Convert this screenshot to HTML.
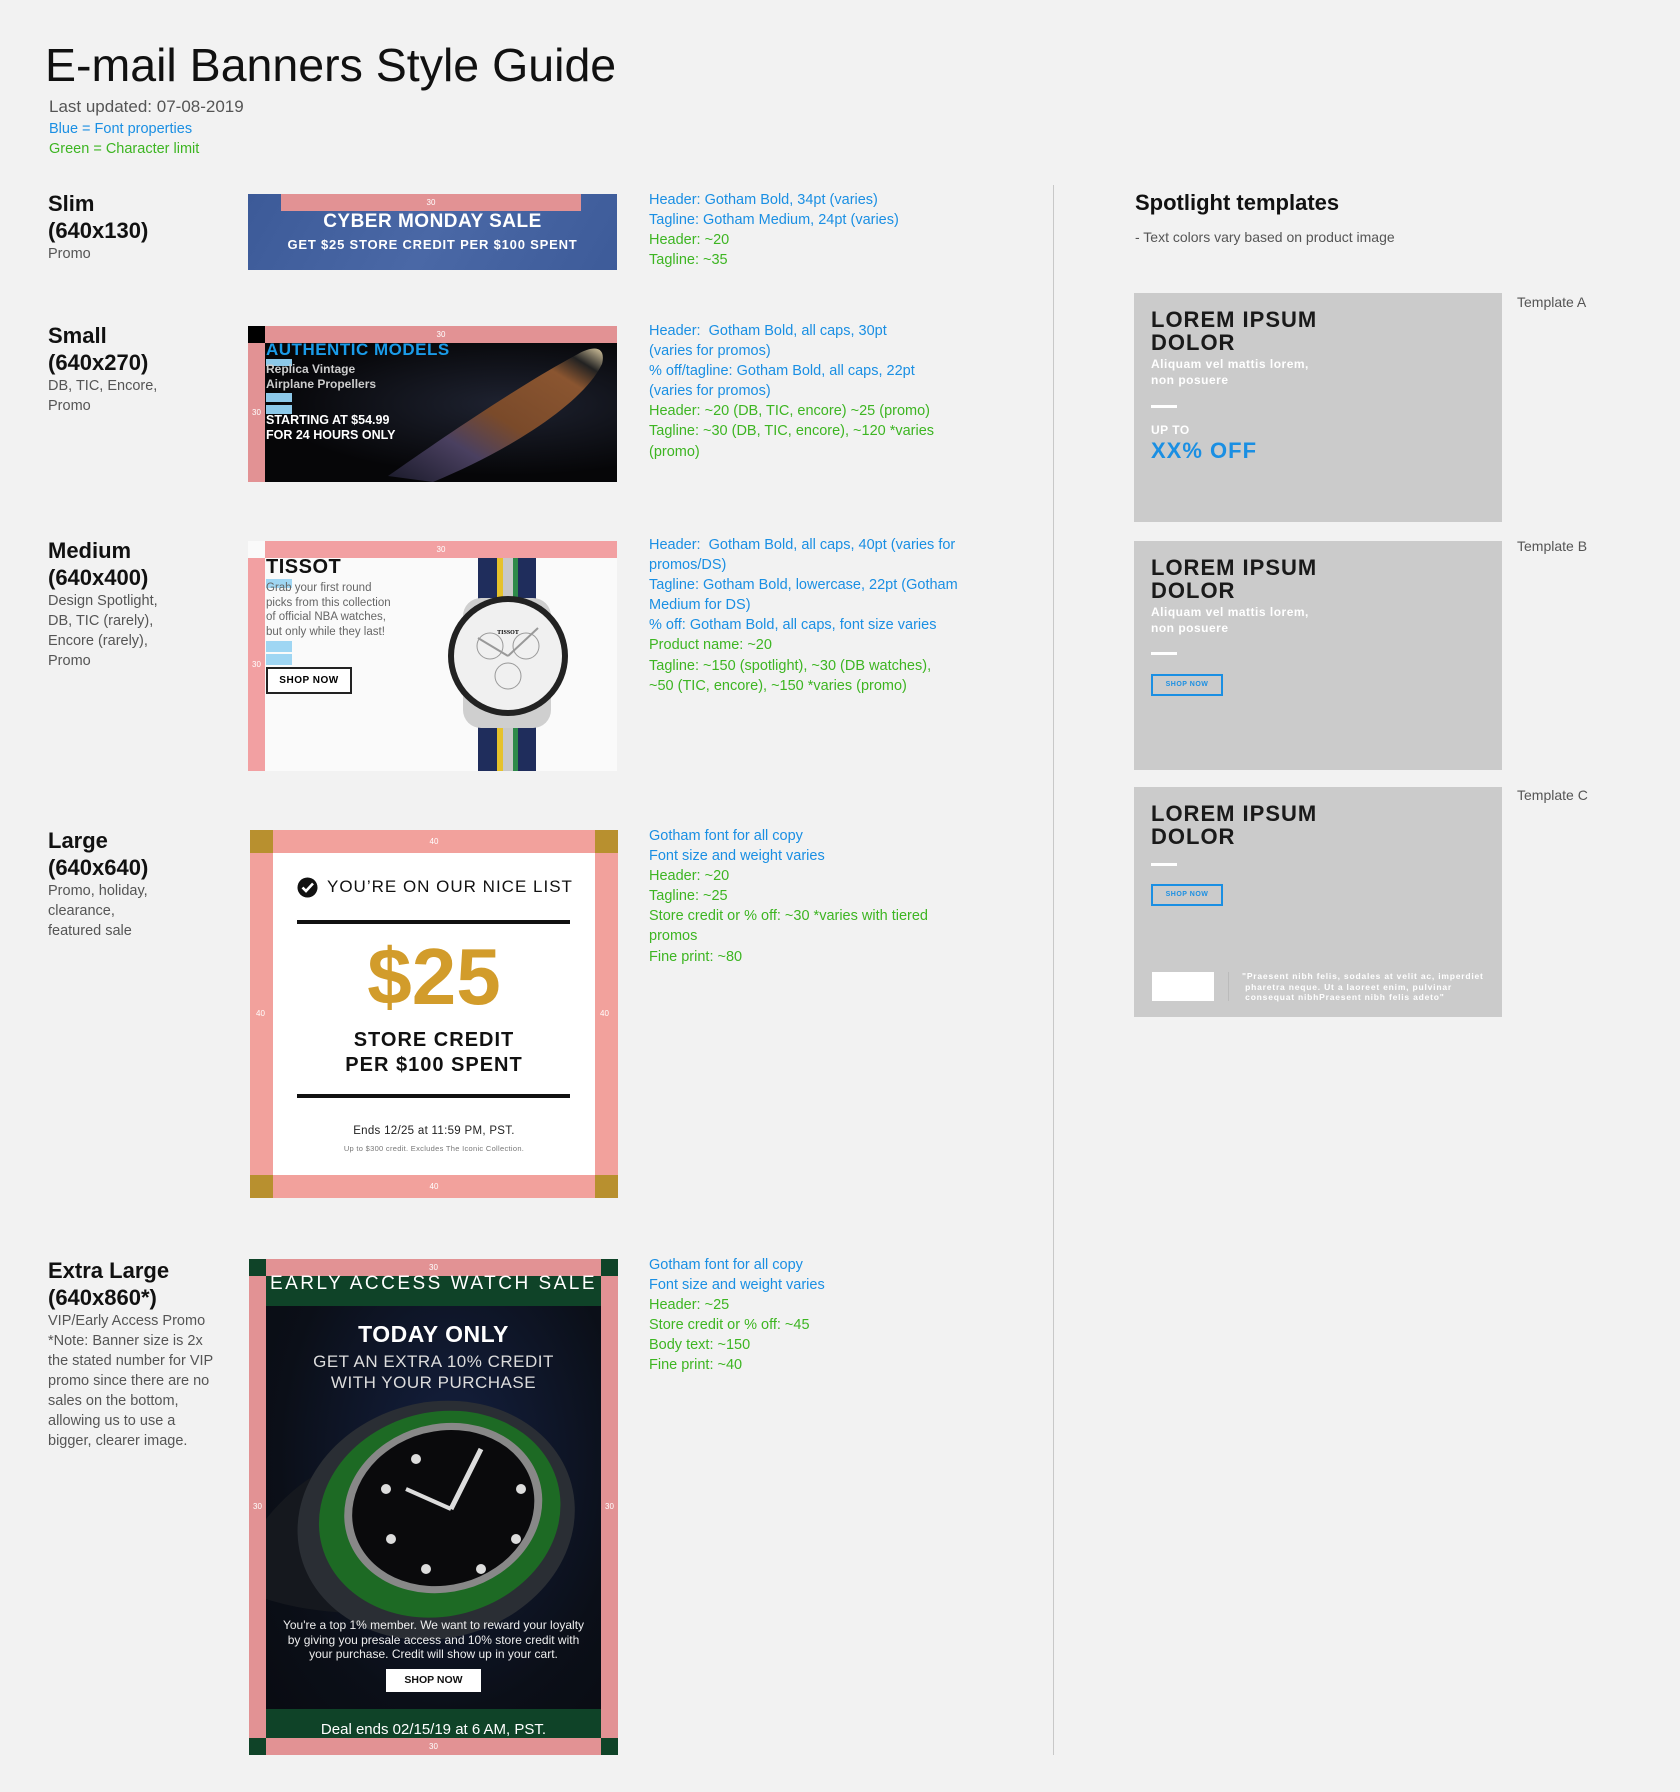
<!DOCTYPE html>
<html><head><meta charset="utf-8"><style>
*{margin:0;padding:0;box-sizing:border-box}
body{width:1680px;height:1792px;background:#f2f2f2;position:relative;overflow:hidden;font-family:"Liberation Sans",Arial,sans-serif}
.a{position:absolute;white-space:nowrap}
.lbl{position:absolute;left:48px;color:#555;font-size:14.5px;line-height:20px}
.lbl b{display:block;color:#111;font-size:22px;line-height:27px}
.n{position:absolute;left:649px;font-size:14.5px;line-height:20.1px}
.bl{color:#1a8fe3}.gr{color:#3db522}
.pk{position:absolute;background:#e29294}
.num{color:#fff;font-size:8px;text-align:center}
.tpl{position:absolute;left:1134px;width:368px;background:#cbcbcb}
.tpl h3{position:absolute;left:17px;font-size:22px;line-height:23px;color:#1a1a1a;letter-spacing:1px;font-weight:bold}
.tpl .s{position:absolute;left:17px;color:#fff;font-size:12px;font-weight:bold;line-height:16px;letter-spacing:.5px}
.tpl .d{position:absolute;left:17px;width:26px;height:3px;background:#fff}
.tpl .btn{position:absolute;left:17px;width:72px;height:22px;border:2px solid #1a8fe3;color:#1a8fe3;font-size:7px;font-weight:bold;text-align:center;line-height:18px;letter-spacing:.5px}
.tl{position:absolute;left:1517px;color:#555;font-size:14px}
</style></head><body>

<div class="a" style="left:45px;top:38px;font-size:46.5px;color:#111">E-mail Banners Style Guide</div>
<div class="a" style="left:49px;top:97px;font-size:17px;color:#555">Last updated: 07-08-2019</div>
<div class="a bl" style="left:49px;top:121px;font-size:14.5px">Blue = Font properties</div>
<div class="a gr" style="left:49px;top:141px;font-size:14.5px">Green = Character limit</div>

<!-- labels -->
<div class="lbl" style="top:190px"><b>Slim</b><b>(640x130)</b>Promo</div>
<div class="lbl" style="top:322px"><b>Small</b><b>(640x270)</b>DB, TIC, Encore,<br>Promo</div>
<div class="lbl" style="top:537px"><b>Medium</b><b>(640x400)</b>Design Spotlight,<br>DB, TIC (rarely),<br>Encore (rarely),<br>Promo</div>
<div class="lbl" style="top:827px"><b>Large</b><b>(640x640)</b>Promo, holiday,<br>clearance,<br>featured sale</div>
<div class="lbl" style="top:1257px"><b>Extra Large</b><b>(640x860*)</b>VIP/Early Access Promo<br>*Note: Banner size is 2x<br>the stated number for VIP<br>promo since there are no<br>sales on the bottom,<br>allowing us to use a<br>bigger, clearer image.</div>

<!-- Slim banner -->
<div class="a" style="left:248px;top:194px;width:369px;height:76px;background:linear-gradient(120deg,#3c5a98,#4a68a6 50%,#3d5b99)">
 <div class="pk num" style="left:33px;top:0;width:300px;height:17px;line-height:17px">30</div>
 <div class="a" style="left:0;width:369px;top:17px;text-align:center;color:#fff;font-weight:bold;font-size:19px;letter-spacing:.5px">CYBER MONDAY SALE</div>
 <div class="a" style="left:0;width:369px;top:43px;text-align:center;color:#fff;font-weight:bold;font-size:13px;letter-spacing:.8px">GET $25 STORE CREDIT PER $100 SPENT</div>
</div>

<!-- Small banner -->
<div class="a" style="left:248px;top:326px;width:369px;height:156px;background:radial-gradient(ellipse at 70% 50%,#1e2230,#060608 65%)">
 <svg class="a" style="left:0;top:0" width="369" height="156"><defs><linearGradient id="pr" x1="0" y1="1" x2="1" y2="0"><stop offset="0" stop-color="#1a1a2a"/><stop offset=".3" stop-color="#4a4060"/><stop offset=".5" stop-color="#7a4a2a"/><stop offset=".8" stop-color="#8a5530"/><stop offset=".9" stop-color="#222"/><stop offset="1" stop-color="#d8c8a0"/></linearGradient></defs>
 <path d="M140 150 C190 115 270 60 330 28 C348 18 358 22 354 38 C335 78 260 125 185 156 Z" fill="url(#pr)"/></svg>
 <div class="a" style="left:0;top:0;width:17px;height:17px;background:#000"></div>
 <div class="pk num" style="left:17px;top:0;width:352px;height:17px;line-height:17px">30</div>
 <div class="pk num" style="left:0;top:17px;width:17px;height:139px;line-height:139px">30</div>
 <div class="a" style="left:18px;top:14px;color:#1a9be8;font-weight:bold;font-size:17px;letter-spacing:.5px">AUTHENTIC MODELS</div>
 <div class="a" style="left:18px;top:33px;width:26px;height:7px;background:#8cc8e8"></div>
 <div class="a" style="left:18px;top:36px;color:#ccc;font-weight:bold;font-size:12px;line-height:15px">Replica Vintage<br>Airplane Propellers</div>
 <div class="a" style="left:18px;top:67px;width:26px;height:9px;background:#8cc8e8"></div>
 <div class="a" style="left:18px;top:79px;width:26px;height:9px;background:#8cc8e8"></div>
 <div class="a" style="left:18px;top:87px;color:#fff;font-weight:bold;font-size:12.5px;line-height:15px">STARTING AT $54.99<br>FOR 24 HOURS ONLY</div>
</div>

<!-- Medium banner -->
<div class="a" style="left:248px;top:541px;width:369px;height:230px;background:#fafafa">
 <div class="pk num" style="left:17px;top:0;width:352px;height:17px;line-height:17px;background:#f2a0a2">30</div>
 <div class="pk num" style="left:0;top:17px;width:17px;height:213px;line-height:213px;background:#f2a0a2">30</div>
 <svg class="a" style="left:190px;top:17px" width="179" height="213">
  <rect x="40" y="0" width="58" height="213" fill="#1f2d5c"/>
  <rect x="59" y="0" width="6" height="213" fill="#e6c22a"/><rect x="65" y="0" width="10" height="213" fill="#c8c8c8"/><rect x="75" y="0" width="5" height="213" fill="#2e8a4a"/>
  <rect x="25" y="40" width="88" height="130" rx="18" fill="#cfcfcf"/>
  <rect x="115" y="80" width="10" height="18" fill="#bbb"/>
  <circle cx="70" cy="98" r="60" fill="#222"/>
  <circle cx="70" cy="98" r="54" fill="#f0f0f0"/>
  <circle cx="52" cy="88" r="13" fill="none" stroke="#999"/><circle cx="88" cy="88" r="13" fill="none" stroke="#999"/><circle cx="70" cy="118" r="13" fill="none" stroke="#999"/>
  <line x1="70" y1="98" x2="40" y2="80" stroke="#999" stroke-width="2"/><line x1="70" y1="98" x2="100" y2="70" stroke="#999" stroke-width="2"/>
  <text x="70" y="76" font-size="6" text-anchor="middle" font-family="Liberation Serif" font-weight="bold">TISSOT</text>
 </svg>
 <div class="a" style="left:18px;top:15px;font-size:20px;font-weight:bold;color:#111;letter-spacing:.5px">TISSOT</div>
 <div class="a" style="left:18px;top:38px;width:26px;height:9px;background:#9fd6f3"></div>
 <div class="a" style="left:18px;top:40px;color:#666;font-size:11.5px;line-height:14.5px">Grab your first round<br>picks from this collection<br>of official NBA watches,<br>but only while they last!</div>
 <div class="a" style="left:18px;top:100px;width:26px;height:11px;background:#9fd6f3"></div>
 <div class="a" style="left:18px;top:113px;width:26px;height:11px;background:#9fd6f3"></div>
 <div class="a" style="left:18px;top:126px;width:86px;height:27px;border:2px solid #222;background:#fff;text-align:center;line-height:23px;font-size:10px;font-weight:bold;letter-spacing:.5px">SHOP NOW</div>
</div>

<!-- Large banner -->
<div class="a" style="left:250px;top:830px;width:368px;height:368px;background:#f2a19c">
 <div class="a" style="left:0;top:0;width:23px;height:23px;background:#b8902f"></div><div class="a" style="right:0;top:0;width:23px;height:23px;background:#b8902f"></div>
 <div class="a" style="left:0;bottom:0;width:23px;height:23px;background:#b8902f"></div><div class="a" style="right:0;bottom:0;width:23px;height:23px;background:#b8902f"></div>
 <div class="a num" style="left:0;width:368px;top:7px">40</div><div class="a num" style="left:0;width:368px;top:352px">40</div>
 <div class="a num" style="left:6px;top:179px">40</div><div class="a num" style="left:350px;top:179px">40</div>
 <div class="a" style="left:23px;top:23px;width:322px;height:322px;background:#fff">
  <svg class="a" style="left:24px;top:24px" width="21" height="21"><circle cx="10.5" cy="10.5" r="10" fill="#111"/><path d="M5.5 10.5 L9 14 L16 6.5" stroke="#fff" stroke-width="2.6" fill="none"/></svg>
  <div class="a" style="left:54px;top:24px;font-size:17px;letter-spacing:1px;color:#111">YOU’RE ON OUR NICE LIST</div>
  <div class="a" style="left:24px;top:67px;width:273px;height:4px;background:#111"></div>
  <div class="a" style="left:0;width:322px;top:81px;text-align:center;font-size:80px;font-weight:bold;color:#d29c2b;line-height:86px">$25</div>
  <div class="a" style="left:0;width:322px;top:175px;text-align:center;font-size:20px;font-weight:bold;letter-spacing:1px;line-height:25px;color:#111">STORE CREDIT<br>PER $100 SPENT</div>
  <div class="a" style="left:24px;top:241px;width:273px;height:4px;background:#111"></div>
  <div class="a" style="left:0;width:322px;top:272px;text-align:center;font-size:11.5px;color:#222;letter-spacing:.3px">Ends 12/25 at 11:59 PM, PST.</div>
  <div class="a" style="left:0;width:322px;top:291px;text-align:center;font-size:7.5px;color:#777;letter-spacing:.3px">Up to $300 credit. Excludes The Iconic Collection.</div>
 </div>
</div>

<!-- XL banner -->
<div class="a" style="left:249px;top:1259px;width:369px;height:496px;background:radial-gradient(ellipse at 55% 40%,#142040,#0b0f18 60%,#080a10)">
 <div class="a" style="left:0;top:0;width:369px;height:47px;background:#0f4328"></div>
 <div class="a" style="left:0;top:450px;width:369px;height:46px;background:#0f4328"></div>
 <svg class="a" style="left:17px;top:120px" width="335" height="300">
  <path d="M0 140 C40 90 90 70 130 80 L140 230 C90 240 30 230 0 220 Z" fill="#15181e"/>
  <g transform="rotate(-15 175 140)">
  <ellipse cx="170" cy="140" rx="140" ry="118" fill="#2a2e34"/>
  <ellipse cx="175" cy="135" rx="122" ry="102" fill="#1d6a24"/>
  <ellipse cx="180" cy="130" rx="100" ry="84" fill="#888"/>
  <ellipse cx="180" cy="130" rx="92" ry="77" fill="#0a0a0c"/>
  </g>
  <g fill="#ddd"><circle cx="150" cy="80" r="5"/><circle cx="120" cy="110" r="5"/><circle cx="125" cy="160" r="5"/><circle cx="160" cy="190" r="5"/><circle cx="215" cy="190" r="5"/><circle cx="250" cy="160" r="5"/><circle cx="255" cy="110" r="5"/></g>
  <path d="M185 130 L215 70" stroke="#ddd" stroke-width="5"/><path d="M185 130 L140 110" stroke="#ddd" stroke-width="4"/>
 </svg>
 <div class="pk num" style="left:17px;top:0;width:335px;height:17px;line-height:17px">30</div>
 <div class="pk num" style="left:17px;top:479px;width:335px;height:17px;line-height:17px">30</div>
 <div class="pk num" style="left:0;top:17px;width:17px;height:462px;line-height:462px">30</div>
 <div class="pk num" style="left:352px;top:17px;width:17px;height:462px;line-height:462px">30</div>
 <div class="a" style="left:0;width:369px;top:14px;text-align:center;color:#fff;font-size:19px;letter-spacing:2.5px">EARLY ACCESS WATCH SALE</div>
 <div class="a" style="left:0;width:369px;top:62px;text-align:center;color:#fff;font-size:23px;font-weight:bold;letter-spacing:.5px">TODAY ONLY</div>
 <div class="a" style="left:0;width:369px;top:92px;text-align:center;color:#ddd;font-size:17px;line-height:21px;letter-spacing:.5px">GET AN EXTRA 10% CREDIT<br>WITH YOUR PURCHASE</div>
 <div class="a" style="left:0;width:369px;top:359px;text-align:center;color:#eee;font-size:12px;line-height:14.5px">You're a top 1% member. We want to reward your loyalty<br>by giving you presale access and 10% store credit with<br>your purchase. Credit will show up in your cart.</div>
 <div class="a" style="left:137px;top:410px;width:95px;height:23px;background:#fff;text-align:center;line-height:23px;font-size:10.5px;font-weight:bold;color:#111">SHOP NOW</div>
 <div class="a" style="left:0;width:369px;top:462px;text-align:center;color:#fff;font-size:15px">Deal ends 02/15/19 at 6 AM, PST.</div>
</div>

<!-- notes -->
<div class="n" style="top:190px"><div class="bl">Header: Gotham Bold, 34pt (varies)</div><div class="bl">Tagline: Gotham Medium, 24pt (varies)</div><div class="gr">Header: ~20</div><div class="gr">Tagline: ~35</div></div>
<div class="n" style="top:321px"><div class="bl">Header:&nbsp; Gotham Bold, all caps, 30pt<br>(varies for promos)<br>% off/tagline: Gotham Bold, all caps, 22pt<br>(varies for promos)</div><div class="gr">Header: ~20 (DB, TIC, encore) ~25 (promo)<br>Tagline: ~30 (DB, TIC, encore), ~120 *varies<br>(promo)</div></div>
<div class="n" style="top:535px"><div class="bl">Header:&nbsp; Gotham Bold, all caps, 40pt (varies for<br>promos/DS)<br>Tagline: Gotham Bold, lowercase, 22pt (Gotham<br>Medium for DS)<br>% off: Gotham Bold, all caps, font size varies</div><div class="gr">Product name: ~20<br>Tagline: ~150 (spotlight), ~30 (DB watches),<br>~50 (TIC, encore), ~150 *varies (promo)</div></div>
<div class="n" style="top:826px"><div class="bl">Gotham font for all copy<br>Font size and weight varies</div><div class="gr">Header: ~20<br>Tagline: ~25<br>Store credit or % off: ~30 *varies with tiered<br>promos<br>Fine print: ~80</div></div>
<div class="n" style="top:1255px"><div class="bl">Gotham font for all copy<br>Font size and weight varies</div><div class="gr">Header: ~25<br>Store credit or % off: ~45<br>Body text: ~150<br>Fine print: ~40</div></div>

<div class="a" style="left:1053px;top:185px;width:1px;height:1570px;background:#c8c8c8"></div>

<!-- spotlight -->
<div class="a" style="left:1135px;top:190px;font-size:22px;font-weight:bold;color:#111">Spotlight templates</div>
<div class="a" style="left:1135px;top:229px;font-size:14px;color:#555">- Text colors vary based on product image</div>

<div class="tpl" style="top:293px;height:229px">
 <h3 style="top:15px">LOREM IPSUM<br>DOLOR</h3>
 <div class="s" style="top:63px">Aliquam vel mattis lorem,<br>non posuere</div>
 <div class="d" style="top:112px"></div>
 <div class="s" style="top:129px">UP TO</div>
 <div class="a" style="left:17px;top:145px;font-size:22px;font-weight:bold;color:#1a8fe3;letter-spacing:1px">XX% OFF</div>
</div>
<div class="tl" style="top:294px">Template A</div>

<div class="tpl" style="top:541px;height:229px">
 <h3 style="top:15px">LOREM IPSUM<br>DOLOR</h3>
 <div class="s" style="top:63px">Aliquam vel mattis lorem,<br>non posuere</div>
 <div class="d" style="top:111px"></div>
 <div class="btn" style="top:133px">SHOP NOW</div>
</div>
<div class="tl" style="top:538px">Template B</div>

<div class="tpl" style="top:787px;height:230px">
 <h3 style="top:15px">LOREM IPSUM<br>DOLOR</h3>
 <div class="d" style="top:76px"></div>
 <div class="btn" style="top:97px">SHOP NOW</div>
 <div class="a" style="left:18px;top:185px;width:62px;height:29px;background:#fff"></div>
 <div class="a" style="left:94px;top:185px;width:1px;height:29px;background:#bbb"></div>
 <div class="a" style="left:108px;top:184px;color:#fff;font-size:8.5px;font-weight:bold;line-height:10.5px;letter-spacing:.8px">"Praesent nibh felis, sodales at velit ac, imperdiet<br>&nbsp;pharetra neque. Ut a laoreet enim, pulvinar<br>&nbsp;consequat nibhPraesent nibh felis adeto"</div>
</div>
<div class="tl" style="top:787px">Template C</div>

</body></html>
